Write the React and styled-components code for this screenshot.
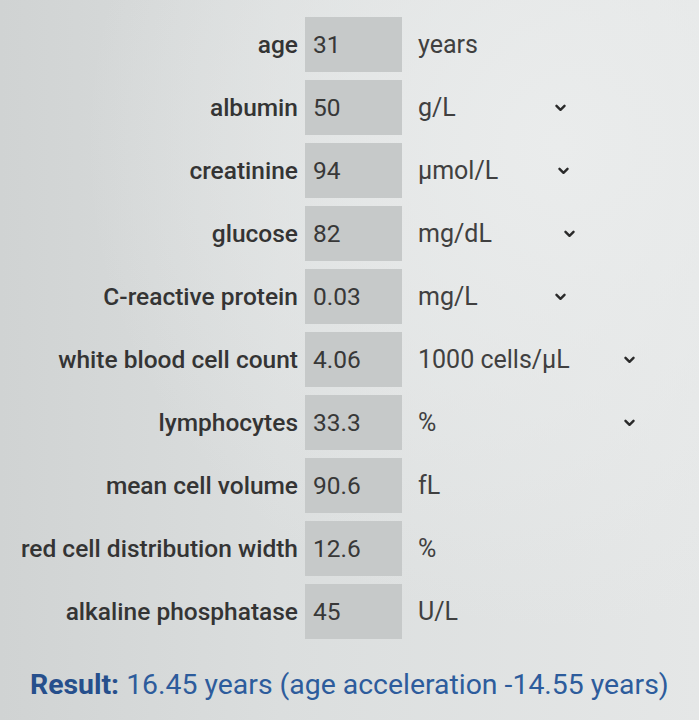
import styled, { createGlobalStyle } from 'styled-components';

const GlobalStyle = createGlobalStyle`
    html, body {
        margin: 0;
        padding: 0;
    }
    body {
        font-family: Roboto, "Liberation Sans", sans-serif;
        background: #dcdede;
    }
`;

const rows = [
    { label: 'age', value: '31', unit: 'years' },
    { label: 'albumin', value: '50', unit: 'g/L', select: 148 },
    { label: 'creatinine', value: '94', unit: 'μmol/L', select: 151 },
    { label: 'glucose', value: '82', unit: 'mg/dL', select: 157 },
    { label: 'C-reactive protein', value: '0.03', unit: 'mg/L', select: 148 },
    { label: 'white blood cell count', value: '4.06', unit: '1000 cells/μL', select: 217 },
    { label: 'lymphocytes', value: '33.3', unit: '%', select: 217 },
    { label: 'mean cell volume', value: '90.6', unit: 'fL' },
    { label: 'red cell distribution width', value: '12.6', unit: '%' },
    { label: 'alkaline phosphatase', value: '45', unit: 'U/L' },
];

function Chevron() {
    return (
        <svg width="11" height="8" viewBox="0 0 11 8">
            <path d="M1.5 1.8 L5.5 5.8 L9.5 1.8" fill="none" stroke="#2a2a2a" strokeWidth="2.4" strokeLinecap="round" strokeLinejoin="round" />
        </svg>
    );
}

export default function App() {
    return (
        <Page>
            <GlobalStyle />
            <Form>
                {rows.map(row => (
                    <Row key={row.label}>
                        <Label>{row.label}</Label>
                        <Input defaultValue={row.value} />
                        {row.select ? (
                            <Unit $width={row.select}>
                                <span>{row.unit}</span>
                                <Chevron />
                            </Unit>
                        ) : (
                            <Unit>
                                <span>{row.unit}</span>
                            </Unit>
                        )}
                    </Row>
                ))}
            </Form>
            <Result>
                <b>Result:</b> 16.45 years (age acceleration -14.55 years)
            </Result>
        </Page>
    );
}

const Page = styled.div`
    width: 699px;
    height: 720px;
    box-sizing: border-box;
    padding-top: 17px;
    overflow: hidden;
    background:
        radial-gradient(ellipse at 80% 20%, #eaecec 0%, rgba(234,236,236,0) 60%),
        linear-gradient(90deg, #d0d3d3 0%, #dbdede 40%, #e5e7e7 100%);
`;

const Form = styled.div`
    display: flex;
    flex-direction: column;
    gap: 8px;
`;

const Row = styled.div`
    display: grid;
    grid-template-columns: 298px 97px 1fr;
    column-gap: 7px;
    align-items: center;
    height: 55px;
`;

const Label = styled.div`
    text-align: right;
    font-size: 24.5px;
    font-weight: 500;
    color: #343434;
    white-space: nowrap;
`;

const Input = styled.input`
    box-sizing: border-box;
    width: 97px;
    height: 55px;
    border: none;
    outline: none;
    background: #c6c9c9;
    padding: 0 8px;
    font-family: Roboto, "Liberation Sans", sans-serif;
    font-size: 24.5px;
    color: #383838;
`;

const Unit = styled.div`
    display: flex;
    align-items: center;
    justify-content: space-between;
    box-sizing: border-box;
    margin-left: 9px;
    width: ${p => (p.$width ? `${p.$width}px` : 'auto')};
    font-size: 25px;
    color: #404040;
    white-space: nowrap;

    svg {
        flex: none;
    }
`;

const Result = styled.div`
    margin-top: 29px;
    padding-left: 30px;
    font-size: 28.4px;
    color: #2d5c9c;
    white-space: nowrap;

    b {
        font-weight: 700;
        color: #264f8c;
    }
`;
